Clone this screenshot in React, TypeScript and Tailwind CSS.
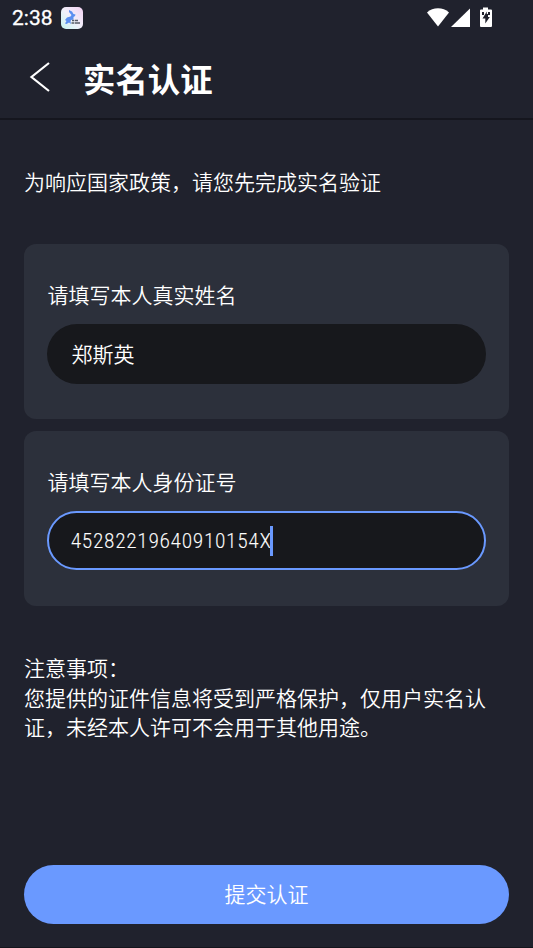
import type { ReactNode } from 'react';

function StatusBar() {
  return (
    <div className="flex h-9 shrink-0 items-center pl-3">
      <span className="w-[40px] font-['Roboto',sans-serif] text-[21px] leading-9 font-normal [-webkit-text-stroke:0.3px_white]">2:38</span>
      <svg className="ml-[9px]" width="22" height="22" viewBox="0 0 22 22">
        <defs>
          <linearGradient id="tile" x1="0" y1="1" x2="1" y2="0">
            <stop offset="0" stopColor="#c5f6ef" />
            <stop offset=".5" stopColor="#f1effa" />
            <stop offset="1" stopColor="#f3d2f3" />
          </linearGradient>
        </defs>
        <rect width="22" height="22" rx="5" fill="url(#tile)" />
        <path d="M8 3L11 4.5L12.5 7L14.5 7.5L14 9L12.5 10L12.5 12.5L10 13L9.5 14.5L10 17L8 15.5L5.5 17L4 16.5L5.5 14L4 13L6 10.5L9.5 9.5L10.5 8L8 5Z" fill="#5b8ff0" />
        <path d="M11 13.5H13M13.7 13.5H17M10.5 16H13M13.6 16H19" stroke="#555b66" strokeWidth="1.4" />
      </svg>
      <svg className="ml-auto" width="106" height="24" viewBox="0 0 106 24">
        <path d="M0 6.4C6 .8 16 .8 22 6.4L11 20.5Z" fill="#fff" />
        <path d="M43 2.5V21H24Z" fill="#fff" />
        <path d="M56 1.5h5v2h3q1 0 1 1v15.5q0 1-1 1H54q-1 0-1-1V4.5q0-1 1-1h2Z" fill="#fff" />
        <path d="M55 6H57V9H55ZM59.8 5.5L55.5 12.5H58.3V17.5L62.8 11H61V9H63V6H61V8H59.8Z" fill="#20222d" />
      </svg>
    </div>
  );
}

function Card({ label, children }: { label: string; children: ReactNode }) {
  return (
    <section className="h-[175px] rounded-xl bg-[#2c303b] pr-[23.5px] pl-[23.4px] pt-[35px]">
      <div className="mb-[15px] h-[30px] leading-[30px]">{label}</div>
      {children}
    </section>
  );
}

export default function App() {
  return (
    <div className="flex h-[948px] w-full flex-col overflow-hidden bg-[#20222d] font-['Noto_Sans_CJK_SC',sans-serif] text-[21px] font-[350] text-white">
      <StatusBar />
      <header className="flex h-[84px] shrink-0 items-center border-b-2 border-[#15161e] pl-[29px]">
        <svg width="22" height="32" viewBox="0 0 22 32" fill="none" stroke="#fff" strokeWidth="2.2">
          <path d="M20 2L2.5 16L20 30" />
        </svg>
        <h1 className="ml-8 pt-0.5 text-[32.4px] leading-[48px] font-bold">实名认证</h1>
      </header>
      <main className="flex flex-1 flex-col px-6">
        <p className="mt-[46px] h-[30px] leading-[30px]">为响应国家政策，请您先完成实名验证</p>
        <div className="mt-[48px] flex flex-col gap-3">
          <Card label="请填写本人真实姓名">
            <div className="flex h-[60px] items-center rounded-full bg-[#17181c] px-6">郑斯英</div>
          </Card>
          <Card label="请填写本人身份证号">
            <div className="flex h-[59px] items-center rounded-full border-2 border-[#6a99ff] bg-[#17181c] px-[22px]">
              <span className="w-[203px] origin-left scale-x-[0.855] pt-0.5 font-['Roboto',sans-serif] text-[21px] font-light tracking-[1.33px] whitespace-nowrap [-webkit-text-stroke:0.15px_white]">45282219640910154X</span>
              <span className="z-10 -ml-[4px] h-[30px] w-[3px] bg-[#6a99ff]" />
            </div>
          </Card>
        </div>
        <div className="mt-[47px] leading-[29.7px]">
          <p>注意事项：</p>
          <p>您提供的证件信息将受到严格保护，仅用户实名认证，未经本人许可不会用于其他用途。</p>
        </div>
        <button className="mt-auto mb-[23px] h-[59px] w-full rounded-full bg-[#6a99ff] pb-0.5 text-white">提交认证</button>
      </main>
      <div className="h-px shrink-0 bg-[#14151c]" />
    </div>
  );
}
